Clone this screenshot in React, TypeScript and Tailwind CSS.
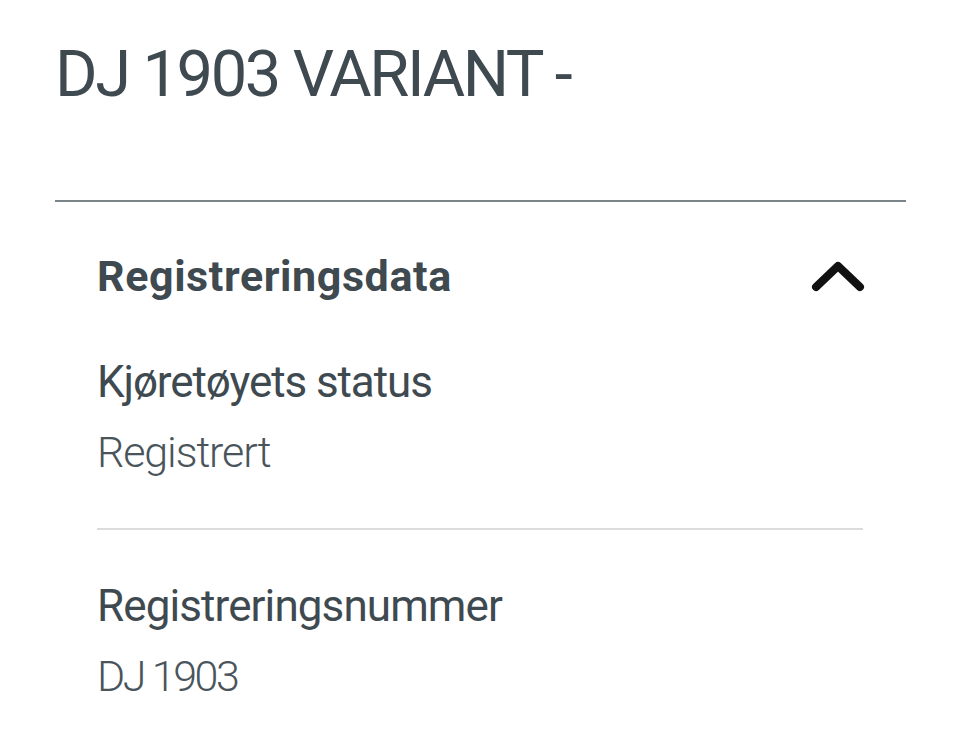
export default function App() {
  return (
    <div className="min-h-screen bg-white font-['Roboto',sans-serif] text-[#3e4950]">
      <div className="pl-[55px] pr-[54px] pt-[34px]">
        <h1 className="text-[65px] leading-[80px] font-normal tracking-[-2.4px]">DJ 1903 VARIANT -</h1>
        <div className="mt-[86px] h-[2px] bg-[#7b8489]" />
      </div>
      <div className="pl-[97px] pr-[97px]">
        <div className="flex items-center justify-between pt-[48px]">
          <h2 className="text-[43px] leading-[52px] font-bold tracking-[0.6px]">Registreringsdata</h2>
          <svg width="56" height="34" viewBox="0 0 56 34" className="mr-[-3px]">
            <path d="M6 28 L28 7 L50 28" fill="none" stroke="#111" strokeWidth="8" strokeLinecap="round" strokeLinejoin="round" />
          </svg>
        </div>
        <div className="pt-[54px] pb-[50px] border-b-2 border-[#dcdcdc]">
          <div className="text-[44px] leading-[52px] tracking-[-1.1px]">Kjøretøyets status</div>
          <div className="mt-[18px] text-[43px] leading-[52px] font-light tracking-[-1.1px] text-[#4a545b]">Registrert</div>
        </div>
        <div className="pt-[50px]">
          <div className="text-[44px] leading-[52px] tracking-[-0.9px]">Registreringsnummer</div>
          <div className="mt-[18px] text-[43px] leading-[52px] font-light tracking-[-2.5px] text-[#4a545b]">DJ 1903</div>
        </div>
      </div>
    </div>
  )
}
